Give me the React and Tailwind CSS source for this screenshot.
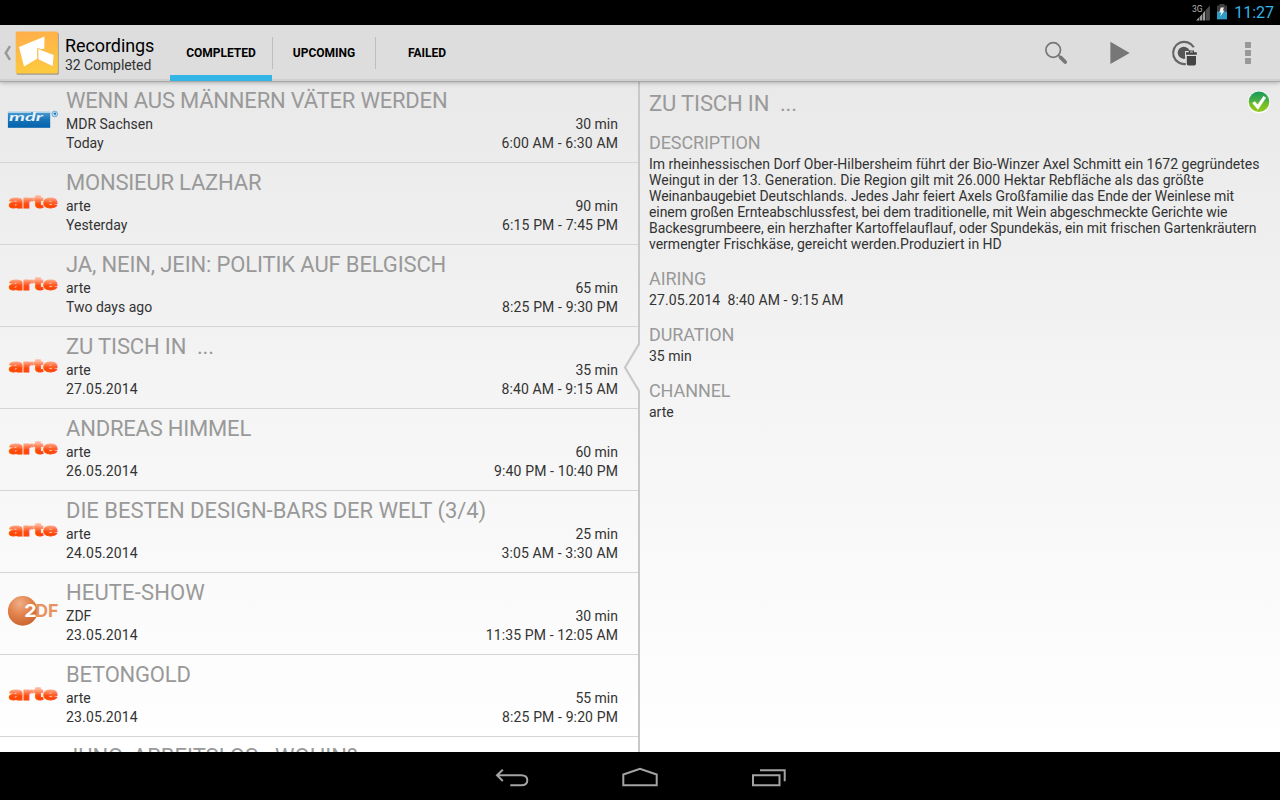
import React from 'react';

const recordings = [
  { title: 'WENN AUS MÄNNERN VÄTER WERDEN', tracking: 'tracking-[-0.2px]', channel: 'MDR Sachsen', logo: 'mdr', date: 'Today', duration: '30 min', time: '6:00 AM - 6:30 AM' },
  { title: 'MONSIEUR LAZHAR', tracking: 'tracking-[-0.2px]', channel: 'arte', logo: 'arte', date: 'Yesterday', duration: '90 min', time: '6:15 PM - 7:45 PM' },
  { title: 'JA, NEIN, JEIN: POLITIK AUF BELGISCH', tracking: 'tracking-[-0.14px]', channel: 'arte', logo: 'arte', date: 'Two days ago', duration: '65 min', time: '8:25 PM - 9:30 PM' },
  { title: 'ZU TISCH IN  ...', tracking: 'tracking-[-0.14px]', channel: 'arte', logo: 'arte', date: '27.05.2014', duration: '35 min', time: '8:40 AM - 9:15 AM' },
  { title: 'ANDREAS HIMMEL', tracking: 'tracking-[-0.2px]', channel: 'arte', logo: 'arte', date: '26.05.2014', duration: '60 min', time: '9:40 PM - 10:40 PM' },
  { title: 'DIE BESTEN DESIGN-BARS DER WELT (3/4)', tracking: 'tracking-[-0.03px]', channel: 'arte', logo: 'arte', date: '24.05.2014', duration: '25 min', time: '3:05 AM - 3:30 AM' },
  { title: 'HEUTE-SHOW', tracking: 'tracking-[0.13px]', channel: 'ZDF', logo: 'zdf', date: '23.05.2014', duration: '30 min', time: '11:35 PM - 12:05 AM' },
  { title: 'BETONGOLD', tracking: 'tracking-[-0.2px]', channel: 'arte', logo: 'arte', date: '23.05.2014', duration: '55 min', time: '8:25 PM - 9:20 PM' },
];

const description = [
  { text: 'Im rheinhessischen Dorf Ober-Hilbersheim führt der Bio-Winzer Axel Schmitt ein 1672 gegründetes', tracking: 'tracking-normal' },
  { text: 'Weingut in der 13. Generation. Die Region gilt mit 26.000 Hektar Rebfläche als das größte', tracking: 'tracking-[0.02px]' },
  { text: 'Weinanbaugebiet Deutschlands. Jedes Jahr feiert Axels Großfamilie das Ende der Weinlese mit', tracking: 'tracking-[-0.055px]' },
  { text: 'einem großen Ernteabschlussfest, bei dem traditionelle, mit Wein abgeschmeckte Gerichte wie', tracking: 'tracking-[-0.078px]' },
  { text: 'Backesgrumbeere, ein herzhafter Kartoffelauflauf, oder Spundekäs, ein mit frischen Gartenkräutern', tracking: 'tracking-[-0.048px]' },
  { text: 'vermengter Frischkäse, gereicht werden.Produziert in HD', tracking: 'tracking-normal' },
];

function ArteLogo() {
  return (
    <svg width="52" height="32" viewBox="0 0 52 32">
      <defs>
        <linearGradient id="arteFill" x1="0" y1="0" x2="0" y2="1">
          <stop offset="0.25" stopColor="#ffb499" />
          <stop offset="0.6" stopColor="#ff4a0c" />
          <stop offset="1" stopColor="#ff4400" />
        </linearGradient>
      </defs>
      <text x="2" y="22.9" textLength="48.5" lengthAdjust="spacingAndGlyphs" fontFamily="Inter, sans-serif" fontWeight="900" fontSize="17" fill="url(#arteFill)" stroke="url(#arteFill)" strokeWidth="0.8">arte</text>
    </svg>
  );
}

function MdrLogo() {
  return (
    <svg width="52" height="32" viewBox="0 0 52 32">
      <defs>
        <linearGradient id="mdrFill" x1="0" y1="0" x2="0" y2="1">
          <stop offset="0" stopColor="#4f9ed2" />
          <stop offset="0.5" stopColor="#1673b8" />
          <stop offset="1" stopColor="#0563ac" />
        </linearGradient>
      </defs>
      <rect x="0.9" y="8.8" width="42.3" height="16" fill="url(#mdrFill)" />
      <path d="M1 9.4H24M26 9.4H43" stroke="#b9d8ec" strokeWidth="1" />
      <text x="2" y="18" textLength="34" lengthAdjust="spacingAndGlyphs" fontFamily="Lato, sans-serif" fontStyle="italic" fontWeight="700" fontSize="11.5" fill="#e6f2fa">mdr</text>
      <circle cx="47.7" cy="11" r="2.9" fill="#b9d8ec" stroke="#5ea3d1" strokeWidth="0.8" />
      <path d="M46.2 10.2L49.2 9.6L48.4 12.5Z" fill="#1c73b8" />
    </svg>
  );
}

function ZdfLogo() {
  return (
    <svg width="52" height="32" viewBox="0 0 52 32">
      <defs>
        <radialGradient id="zdfBall" cx="0.4" cy="0.25" r="0.8">
          <stop offset="0" stopColor="#eeb08a" />
          <stop offset="0.45" stopColor="#e4854f" />
          <stop offset="1" stopColor="#c8622d" />
        </radialGradient>
      </defs>
      <circle cx="15.7" cy="15.9" r="14.8" fill="url(#zdfBall)" />
      <g fontFamily="Inter, sans-serif" fontWeight="700" fontSize="18">
        <text x="17.3" y="22.4" textLength="12.4" lengthAdjust="spacingAndGlyphs" fill="#fff">2</text>
        <text x="28.2" y="22.4" textLength="23.2" lengthAdjust="spacingAndGlyphs" fill="#e8935f">DF</text>
      </g>
    </svg>
  );
}

const logos = { arte: ArteLogo, mdr: MdrLogo, zdf: ZdfLogo };

function StatusBar() {
  return (
    <div className="flex h-[25px] shrink-0 items-center justify-end bg-black pr-[6px]">
      <svg width="20" height="20" viewBox="0 0 20 20" className="mr-[5px]">
        <text x="1" y="8.6" fontFamily="Roboto, sans-serif" fontSize="8.5" fill="#b5b5b5">3G</text>
        <path d="M5 17.5H8V14.5ZM8.6 17.5V13.9L11.2 11V17.5ZM11.8 17.5V10.4L14.2 7.6V17.5Z" fill="#9b9b9b" />
        <path d="M14.8 17.5V7L18.9 2.5V17.5Z" fill="#4a4a4a" />
      </svg>
      <svg width="12" height="20" viewBox="0 0 12 20" className="mr-[6px]">
        <path d="M1 2.5H3.5V1H8.5V2.5H11V16.3H1Z" fill="#414141" />
        <path d="M1 8.7H11V16.3H1Z" fill="#2f9bc7" />
        <path d="M4.8 4.6H8L6.9 7.6H8.7L4.2 13.4L5.3 9.6H3.3Z" fill="#f2f2f2" />
      </svg>
      <span className="text-[16px] leading-[25px] text-[#33b5e5]">11:27</span>
    </div>
  );
}

function AppIcon() {
  return (
    <svg width="46" height="46" viewBox="0 0 46 46">
      <defs>
        <linearGradient id="appFill" x1="0" y1="0" x2="0.2" y2="1">
          <stop offset="0" stopColor="#ffad4b" />
          <stop offset="1" stopColor="#fdc93f" />
        </linearGradient>
      </defs>
      <rect x="2.5" y="2.5" width="42.3" height="42.3" rx="1.5" fill="#8d8270" opacity="0.75" />
      <rect x="1.7" y="1.6" width="42.2" height="42" rx="1.5" fill="url(#appFill)" />
      <path d="M5 17L30.5 6.6L30.3 18.8L23 19.6L23.5 28.6L10 36.4Z" fill="#fff" />
      <path d="M23.8 18.4L40.2 24.8L39.2 36.9L24 29.6Z" fill="#fff" stroke="#fbb84a" strokeWidth="0.9" />
    </svg>
  );
}

function ActionBar() {
  return (
    <header className="relative z-10 flex h-[57px] shrink-0 border-b border-[#a8a8a8] bg-[#dddddd] shadow-[inset_0_-2px_0_#d0d0d0,0_1px_4px_rgba(0,0,0,0.25)]">
      <div className="flex w-[170px] items-center pl-[3px]">
        <svg width="9" height="16" viewBox="0 0 9 16">
          <path d="M7 1.2L2.7 8L7 14.8" fill="none" stroke="#989898" strokeWidth="2.4" />
        </svg>
        <div className="ml-[2px]"><AppIcon /></div>
        <div className="ml-[5px] pt-[3px] whitespace-nowrap">
          <div className="text-[18px] leading-[21px] tracking-[-0.08px] text-black">Recordings</div>
          <div className="pt-px text-[14px] leading-[17px] tracking-[-0.08px] text-[#333]">32 Completed</div>
        </div>
      </div>
      <nav className="flex text-[12px] font-bold text-black">
        <div className="flex w-[102px] items-center justify-center border-b-[6px] border-[#33b5e5] pt-[5px]">COMPLETED</div>
        <div className="my-[12px] w-px bg-[#bebebe]" />
        <div className="flex w-[102px] items-center justify-center pb-px">UPCOMING</div>
        <div className="my-[12px] w-px bg-[#bebebe]" />
        <div className="flex w-[102px] items-center justify-center pb-px">FAILED</div>
      </nav>
      <div className="ml-auto flex items-center">
        <div className="flex w-16 justify-center">
          <svg width="32" height="32" viewBox="0 0 32 32">
            <circle cx="13.2" cy="13" r="7.3" fill="none" stroke="#777" strokeWidth="1.7" />
            <path d="M18.4 18.2L21 20.8" stroke="#777" strokeWidth="1.7" />
            <path d="M20.6 20.4L25.2 25" stroke="#777" strokeWidth="3.8" strokeLinecap="round" />
          </svg>
        </div>
        <div className="flex w-16 justify-center">
          <svg width="32" height="32" viewBox="0 0 32 32"><path d="M6.4 4.7L25.7 15.9L6.4 27.1Z" fill="#777" /></svg>
        </div>
        <div className="flex w-16 justify-center">
          <svg width="32" height="32" viewBox="0 0 32 32">
            <path d="M25.8 10.3A11.1 11.1 0 1 0 18.5 26.8" fill="none" stroke="#666" strokeWidth="2.2" />
            <circle cx="15.8" cy="15.8" r="6.1" fill="#555" />
            <path d="M17 14H30V29H18L17 19Z" fill="#ddd" />
            <path d="M18 15.2H20.8V13.4H26V15.2H28.8V17.7H18Z" fill="#444" />
            <path d="M22 14.5H24.9V15.4H22Z" fill="#ddd" />
            <path d="M18.8 19H28V26.5Q28 28.4 26.3 28.4H20.5Q18.8 28.4 18.8 26.5Z" fill="#444" />
          </svg>
        </div>
        <div className="flex w-16 flex-col items-center gap-[2px]">
          <i className="size-[6px] bg-[#999]" />
          <i className="size-[6px] bg-[#999]" />
          <i className="size-[6px] bg-[#999]" />
        </div>
      </div>
    </header>
  );
}

function RecordingRow({ item }) {
  const Logo = logos[item.logo];
  const rowClass = 'flex justify-between text-[14px] leading-[19px]';
  return (
    <li className="flex h-[82px] shrink-0 border-b border-[#d5d5d5]">
      <div className="flex w-[66px] items-center pl-[7px] pb-[5px]"><Logo /></div>
      <div className="flex-1 pr-5 pt-[6px]">
        <div className={`whitespace-pre text-[22px] leading-[28px] text-[#999] ${item.tracking}`}>{item.title}</div>
        <div className={rowClass}><span>{item.channel}</span><span>{item.duration}</span></div>
        <div className={rowClass}>
          <span className={item.date.includes('.') ? 'tracking-[0.15px]' : ''}>{item.date}</span>
          <span className="tracking-[0.12px]">{item.time}</span>
        </div>
      </div>
    </li>
  );
}

function Divider() {
  return (
    <div className="flex w-[2px] shrink-0 flex-col">
      <div className="h-[262px] bg-[#c8c8c8]" />
      <div className="relative h-[48px]">
        <svg width="18" height="50" viewBox="0 0 18 50" className="absolute right-0 -top-px">
          <path d="M17 0V1L3 24.5L17 48V50" fill="none" stroke="#c8c8c8" strokeWidth="2.2" />
        </svg>
      </div>
      <div className="flex-1 bg-[#c8c8c8]" />
    </div>
  );
}

function Field({ label, children }) {
  return (
    <section className="mb-[15px]">
      <h3 className="text-[18px] leading-[24px] tracking-[-0.1px] text-[#999]">{label}</h3>
      <div className="whitespace-pre pt-px text-[14px] leading-[16px]">{children}</div>
    </section>
  );
}

function Details() {
  return (
    <main className="flex-1 pl-[9px] pt-[8px]">
      <div className="mb-[13px] flex h-[28px] justify-between">
        <h2 className="whitespace-pre text-[22px] leading-[28px] tracking-[-0.14px] text-[#999]">{'ZU TISCH IN  ...'}</h2>
        <svg width="24" height="24" viewBox="0 0 24 24" className="mr-[9px]">
          <defs>
            <linearGradient id="okFill" x1="0" y1="0" x2="0" y2="1">
              <stop offset="0" stopColor="#169a55" />
              <stop offset="0.45" stopColor="#4aae4a" />
              <stop offset="0.55" stopColor="#6dbb25" />
              <stop offset="1" stopColor="#95c91f" />
            </linearGradient>
          </defs>
          <circle cx="12" cy="12.3" r="11.2" fill="#fff" opacity="0.8" />
          <circle cx="12" cy="11.8" r="10.3" fill="url(#okFill)" />
          <path d="M6.5 12.3L10.8 17.2L17.8 6.9" fill="none" stroke="#fff" strokeWidth="3.2" />
        </svg>
      </div>
      <Field label="DESCRIPTION">
        {description.map((line) => <p key={line.text} className={line.tracking}>{line.text}</p>)}
      </Field>
      <Field label="AIRING"><span className="tracking-[0.1px]">{'27.05.2014  8:40 AM - 9:15 AM'}</span></Field>
      <Field label="DURATION">35 min</Field>
      <Field label="CHANNEL">arte</Field>
    </main>
  );
}

function NavigationBar() {
  return (
    <footer className="flex h-12 shrink-0 items-center justify-center gap-[88px] bg-black pt-[7px]">
      <svg width="40" height="32" viewBox="0 0 40 32" fill="none" stroke="#a3a3a3" strokeWidth="2">
        <path d="M10.8 5.7L5 11.3L10.8 17M5.3 11.3H29.3Q35.3 11.3 35.3 16.3Q35.3 21.3 29.3 21.3H18.3" />
      </svg>
      <svg width="40" height="32" viewBox="0 0 40 32" fill="none" stroke="#a3a3a3" strokeWidth="2">
        <path d="M3.3 21.3V10.5L20 4.9L36.7 10.5V21.3Z" />
      </svg>
      <svg width="40" height="32" viewBox="0 0 40 32" fill="none" stroke="#a3a3a3" strokeWidth="2">
        <path d="M5 11.3H31.5V21.3H5ZM12 6.3H36.7V17.3" />
      </svg>
    </footer>
  );
}

export default function App() {
  return (
    <div className="flex h-[800px] w-[1280px] flex-col overflow-hidden font-['Roboto',sans-serif] text-[#333]">
      <StatusBar />
      <ActionBar />
      <div className="flex min-h-0 flex-1 bg-linear-to-b from-[#e9e9e9] via-[#f4f4f4] via-45% to-white">
        <ul className="-mt-px flex w-[638px] shrink-0 flex-col overflow-hidden">
          {recordings.map((item) => <RecordingRow key={item.title} item={item} />)}
          <li className="min-h-0 overflow-hidden pl-[66px] pt-[6px] whitespace-pre text-[22px] leading-[28px] text-[#999]">JUNG, ARBEITSLOS - WOHIN?</li>
        </ul>
        <Divider />
        <Details />
      </div>
      <NavigationBar />
    </div>
  );
}
